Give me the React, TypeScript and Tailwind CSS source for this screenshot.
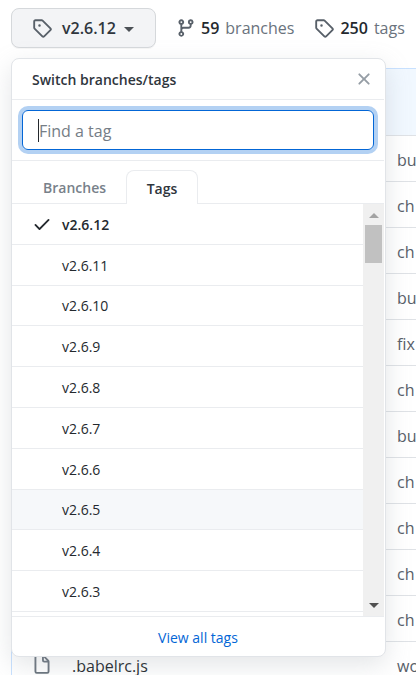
import { useState } from "react";

const TAG =
  "M2.5 7.775V2.75a.25.25 0 01.25-.25h5.025a.25.25 0 01.177.073l6.25 6.25a.25.25 0 010 .354l-5.025 5.025a.25.25 0 01-.354 0l-6.25-6.25a.25.25 0 01-.073-.177zm-1.5 0V2.75C1 1.784 1.784 1 2.75 1h5.025c.464 0 .91.184 1.238.513l6.25 6.25a1.75 1.75 0 010 2.474l-5.026 5.026a1.75 1.75 0 01-2.474 0l-6.25-6.25A1.75 1.75 0 011 7.775zM6 5a1 1 0 100 2 1 1 0 000-2z";
const BRANCH =
  "M11.75 2.5a.75.75 0 100 1.5.75.75 0 000-1.5zm-2.25.75a2.25 2.25 0 113 2.122V6A2.5 2.5 0 0110 8.5H6a1 1 0 00-1 1v1.128a2.251 2.251 0 11-1.5 0V5.372a2.25 2.25 0 111.5 0v1.836A2.492 2.492 0 016 7h4a1 1 0 001-1v-.628A2.25 2.25 0 019.5 3.25zM4.25 12a.75.75 0 100 1.5.75.75 0 000-1.5zM3.5 3.25a.75.75 0 111.5 0 .75.75 0 01-1.5 0z";
const CHECK =
  "M13.78 4.22a.75.75 0 010 1.06l-7.25 7.25a.75.75 0 01-1.06 0L2.22 9.28a.75.75 0 011.06-1.06L6 10.94l6.72-6.72a.75.75 0 011.06 0z";
const CLOSE =
  "M3.72 3.72a.75.75 0 011.06 0L8 6.94l3.22-3.22a.75.75 0 111.06 1.06L9.06 8l3.22 3.22a.75.75 0 11-1.06 1.06L8 9.06l-3.22 3.22a.75.75 0 01-1.06-1.06L6.94 8 3.72 4.78a.75.75 0 010-1.06z";
const FILE =
  "M3.75 1.5a.25.25 0 00-.25.25v11.5c0 .138.112.25.25.25h8.5a.25.25 0 00.25-.25V6H9.75A1.75 1.75 0 018 4.25V1.5H3.75zm5.75.56v2.19c0 .138.112.25.25.25h2.19L9.5 2.06zM2 1.75C2 .784 2.784 0 3.75 0h5.086c.464 0 .909.184 1.237.513l3.414 3.414c.329.328.513.773.513 1.237v8.086A1.75 1.75 0 0112.25 15h-8.5A1.75 1.75 0 012 13.25V1.75z";

function Icon({ d, className }: { d: string; className: string }) {
  return (
    <svg viewBox="0 0 16 16" aria-hidden="true" fill="currentColor" className={`shrink-0 ${className}`}>
      <path fillRule="evenodd" d={d} />
    </svg>
  );
}

const tags = ["v2.6.12", "v2.6.11", "v2.6.10", "v2.6.9", "v2.6.8", "v2.6.7", "v2.6.6", "v2.6.5", "v2.6.4", "v2.6.3"];

const files = [
  { message: "bu" },
  { message: "ch" },
  { message: "ch" },
  { message: "bu" },
  { message: "fix" },
  { message: "ch" },
  { message: "bu" },
  { message: "ch" },
  { message: "ch" },
  { message: "ch" },
  { message: "ch" },
  { name: ".babelrc.js", message: "wo" },
];

function SwitchMenu() {
  const [query, setQuery] = useState("");
  return (
    <div
      role="dialog"
      aria-label="Switch branches/tags"
      className="absolute top-full left-0 z-10 mt-2.5 w-[375px] rounded-lg border border-[#e1e4e8] bg-white pr-px text-sm text-[#24292e] shadow-[0_8px_24px_rgba(149,157,165,0.25)]"
    >
      <header className="flex h-[41px] items-center justify-between border-b border-[#eaecef] pr-2.5 pl-5">
        <span className="pt-0.5 font-semibold text-[#2f363d]">Switch branches/tags</span>
        <button type="button" aria-label="Close" className="text-[#959da5]">
          <Icon d={CLOSE} className="size-5" />
        </button>
      </header>

      <div className="flex h-[61px] items-center border-b border-[#eaecef] px-2.5">
        <div className="flex h-10 flex-1 items-center rounded-md border border-[#0366d6] px-[15px] shadow-[0_0_0_4px_#b3d1f3]">
          <span className="h-[23px] w-px bg-[#24292e]" />
          <input
            aria-label="Find a tag"
            placeholder="Find a tag"
            value={query}
            onChange={(e) => setQuery(e.target.value)}
            className="min-w-0 flex-1 bg-transparent pt-0.5 text-base text-[#24292e] outline-none placeholder:text-[#757d86]"
          />
        </div>
      </div>

      <div role="tablist" className="flex h-[43px] items-end border-b border-[#eaecef] pl-[10px]">
        <button
          type="button"
          role="tab"
          aria-selected="false"
          className="h-[33px] w-[104px] pt-0.5 pl-[21px] text-left font-semibold text-[#78818a]"
        >
          Branches
        </button>
        <button
          type="button"
          role="tab"
          aria-selected="true"
          className="-mb-px h-[34px] w-[72px] rounded-t-lg border border-b-0 border-[#eaecef] bg-white pt-0.5 font-semibold text-[#2f363d]"
        >
          Tags
        </button>
      </div>

      <div className="flex h-[412px] overflow-hidden">
        <ul className="grid h-[408px] flex-1 auto-rows-fr">
          {tags.map((tag) => (
            <li key={tag} className="border-b border-[#eaecef]">
              <button
                type="button"
                className={`flex h-full w-full items-center pl-5 ${tag === "v2.6.5" ? "bg-[#f6f8fa]" : "bg-white"} ${
                  tag === "v2.6.12" ? "font-semibold" : ""
                }`}
              >
                <span className="w-[30px]">{tag === "v2.6.12" && <Icon d={CHECK} className="size-5" />}</span>
                <span className="pt-0.5">{tag}</span>
              </button>
            </li>
          ))}
        </ul>
        <div aria-hidden="true" className="flex w-[21px] flex-col items-center bg-[#f0f0f0] pt-[9px] pb-2">
          <svg viewBox="0 0 10 5" className="h-[5px] w-2.5 fill-[#a3a3a3]">
            <path d="M5 0 10 5H0z" />
          </svg>
          <span className="mt-[7px] h-[38px] w-[17px] bg-[#c1c1c1]" />
          <svg viewBox="0 0 10 5" className="mt-auto h-[5px] w-2.5 fill-[#505050]">
            <path d="M0 0h10L5 5z" />
          </svg>
        </div>
      </div>

      <footer className="flex h-10 items-center justify-center border-t border-[#eaecef] pt-0.5">
        <a href="#tags" className="text-[#0366d6]">
          View all tags
        </a>
      </footer>
    </div>
  );
}

export default function App() {
  return (
    <main className="h-screen overflow-hidden bg-white pt-2 pl-[11px] font-['Open_Sans','Noto_Sans',sans-serif] text-base text-[#24292e]">
      <div className="flex items-center whitespace-nowrap">
        <div className="relative shrink-0">
          <button
            type="button"
            className="flex h-10 w-[145px] items-center rounded-lg border border-[#d5d8db] bg-[#f3f4f6] pl-5 font-semibold text-[#2f363d] shadow-[0_1px_0_rgba(27,31,35,0.04)]"
          >
            <Icon d={TAG} className="size-5 text-[#586069]" />
            <span className="ml-2.5">v2.6.12</span>
            <svg viewBox="0 0 10 5" aria-hidden="true" className="mt-0.5 ml-2 h-[5px] w-2.5 fill-[#4c5156]">
              <path d="M0 0h10L5 5z" />
            </svg>
          </button>
          <SwitchMenu />
        </div>
        <a href="#branches" className="ml-5 flex items-center">
          <Icon d={BRANCH} className="size-5 text-[#586069]" />
          <strong className="ml-[5px] font-semibold">59</strong>
          <span className="ml-1.5 text-[#6a737d]">branches</span>
        </a>
        <a href="#all-tags" className="ml-5 flex items-center">
          <Icon d={TAG} className="size-5 text-[#586069]" />
          <strong className="ml-1.5 font-semibold">250</strong>
          <span className="ml-1.5 text-[#6a737d]">tags</span>
        </a>
      </div>

      <div className="mt-5 overflow-hidden rounded-tl-lg border-t border-l border-[#c8e1ff]">
        <div className="h-[66px] bg-[#f1f8ff]" />
        <table className="w-full table-fixed border-collapse">
          <tbody>
            {files.map((file, i) => (
              <tr key={i} className="h-[46px] border-t border-[#dfe2e6]">
                <td className="w-[60px] pl-5">
                  {file.name && <Icon d={FILE} className="size-5 text-[#6a737d]" />}
                </td>
                <td className="w-[325px] pt-0.5">{file.name}</td>
                <td className="pt-0.5 whitespace-nowrap text-[#586069]">{file.message}</td>
              </tr>
            ))}
          </tbody>
        </table>
      </div>
    </main>
  );
}
